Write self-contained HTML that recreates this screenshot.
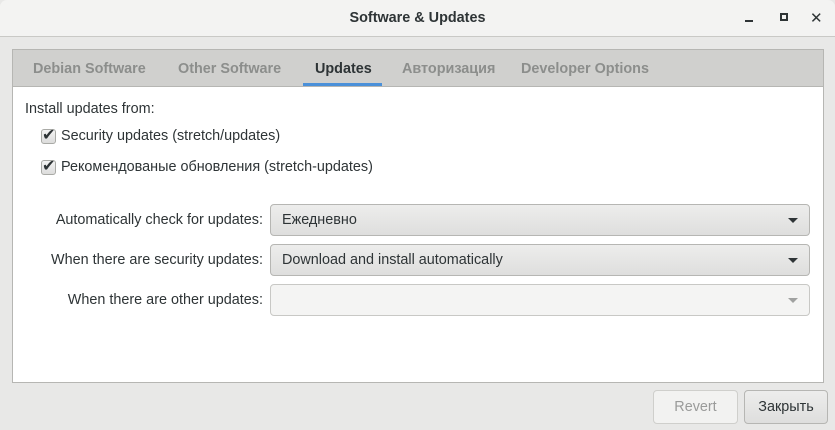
<!DOCTYPE html>
<html><head><meta charset="utf-8"><style>
*{margin:0;padding:0;box-sizing:border-box}
body{width:835px;height:430px;background:#e8e8e7;font-family:"Liberation Sans","DejaVu Sans",sans-serif;font-size:14.4px;color:#2e3436;position:relative;overflow:hidden}
.abs{position:absolute;white-space:nowrap}
#title{left:0;top:0;width:835px;height:37px;background:#f3f3f2;border-bottom:1px solid #c9c9c6;border-radius:7px 7px 0 0}
#frame{left:12px;top:49px;width:812px;height:334px;border:1px solid #b6b6b3;background:#fff}
#tabs{left:13px;top:50px;width:810px;height:37px;background:#d0d0ce;border-bottom:1px solid #b6b6b3}
.tab{top:61px;font-weight:bold;color:#8c8e8c;font-size:14.4px}
.cb{width:15px;height:15px;border:1px solid #a9aaa6;border-radius:3px;background:linear-gradient(#f4f4f4,#dcdcdb)}
.combo{left:270px;width:540px;height:32px;border:1px solid #b6b6b3;border-radius:4px;background:linear-gradient(#ededec,#dededd);padding:7px 11px}
.arr{position:absolute;right:11px;top:13px;width:0;height:0;border-left:5px solid transparent;border-right:5px solid transparent;border-top:5px solid #2e3436}
.lbl{text-align:right;right:572px}
.btn{top:390px;height:34px;border:1px solid #b6b6b3;border-radius:4px;text-align:center;line-height:33px}
</style></head><body>
<div class="abs" id="title"></div>
<div class="abs" style="left:0;top:10px;width:835px;text-align:center;font-weight:bold;font-size:14.4px">Software &amp; Updates</div>
<div class="abs" style="left:745px;top:20px;width:8px;height:2px;background:#2e3436"></div>
<div class="abs" style="left:780px;top:13px;width:8px;height:8px;border:2px solid #2e3436"></div>
<div class="abs" style="left:810px;top:9px;font-size:15px;font-weight:bold">✕</div>
<div class="abs" id="frame"></div>
<div class="abs" id="tabs"></div>
<div class="abs tab" style="left:33px">Debian Software</div>
<div class="abs tab" style="left:178px">Other Software</div>
<div class="abs tab" style="left:315px;color:#2e3436">Updates</div>
<div class="abs" style="left:303px;top:83px;width:79px;height:3px;background:#4a90d9"></div>
<div class="abs tab" style="left:402px">Авторизация</div>
<div class="abs tab" style="left:521px">Developer Options</div>
<div class="abs" style="left:25px;top:101px">Install updates from:</div>
<div class="abs cb" style="left:41px;top:129px"></div>
<div class="abs" style="left:42px;top:125px;font-size:16px;font-weight:bold">✔</div>
<div class="abs" style="left:61px;top:128px">Security updates (stretch/updates)</div>
<div class="abs cb" style="left:41px;top:160px"></div>
<div class="abs" style="left:42px;top:156px;font-size:16px;font-weight:bold">✔</div>
<div class="abs" style="left:61px;top:159px">Рекомендованые обновления (stretch-updates)</div>
<div class="abs lbl" style="top:212px">Automatically check for updates:</div>
<div class="abs lbl" style="top:252px">When there are security updates:</div>
<div class="abs lbl" style="top:292px">When there are other updates:</div>
<div class="abs combo" style="top:204px">Ежедневно<div class="arr"></div></div>
<div class="abs combo" style="top:244px">Download and install automatically<div class="arr"></div></div>
<div class="abs combo" style="top:284px;background:#f4f4f3;border-color:#c8c8c5"><div class="arr" style="border-top-color:#a0a1a0"></div></div>
<div class="abs btn" style="left:653px;width:85px;background:#f2f2f1;color:#9a9b9a;border-color:#cfcfcc">Revert</div>
<div class="abs btn" style="left:744px;width:84px;background:linear-gradient(#ededec,#dededd)">Закрыть</div>
</body></html>
